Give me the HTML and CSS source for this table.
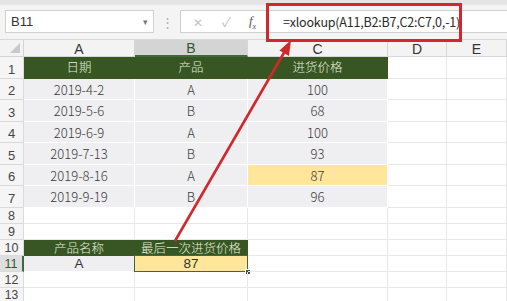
FILE: index.html
```html
<!DOCTYPE html>
<html lang="zh-CN">
<head>
<meta charset="utf-8">
<link rel="stylesheet" href="styles.css">
</head>
<body>
<div class="app">
  <div class="topbar">
    <div class="namebox"><span>B11</span><span class="caret">▾</span></div>
    <div class="grip">⋮</div>
    <div class="fbar">
      <div class="fbtns">
        <span class="fbtn x">✕</span>
        <span class="fbtn ok">✓</span>
        <span class="fbtn fx"><i>f</i><sub>x</sub></span>
      </div>
      <div class="formula">=xlookup(A11,B2:B7,C2:C7,0,-1)</div>
    </div>
  </div>
  <div class="sheet">
    <div class="c corner"><span class="tri"></span></div>
    <div class="c ch">A</div><div class="c ch sel">B</div><div class="c ch">C</div><div class="c ch">D</div><div class="c ch">E</div>

    <div class="c rh">1</div><div class="c g">日期</div><div class="c g">产品</div><div class="c g">进货价格</div><div class="c"></div><div class="c"></div>
    <div class="c rh">2</div><div class="c d">2019-4-2</div><div class="c d">A</div><div class="c d">100</div><div class="c"></div><div class="c"></div>
    <div class="c rh">3</div><div class="c d">2019-5-6</div><div class="c d">B</div><div class="c d">68</div><div class="c"></div><div class="c"></div>
    <div class="c rh">4</div><div class="c d">2019-6-9</div><div class="c d">A</div><div class="c d">100</div><div class="c"></div><div class="c"></div>
    <div class="c rh">5</div><div class="c d">2019-7-13</div><div class="c d">B</div><div class="c d">93</div><div class="c"></div><div class="c"></div>
    <div class="c rh">6</div><div class="c d">2019-8-16</div><div class="c d">A</div><div class="c d y">87</div><div class="c"></div><div class="c"></div>
    <div class="c rh">7</div><div class="c d">2019-9-19</div><div class="c d">B</div><div class="c d">96</div><div class="c"></div><div class="c"></div>
    <div class="c rh sm">8</div><div class="c"></div><div class="c"></div><div class="c"></div><div class="c"></div><div class="c"></div>
    <div class="c rh sm">9</div><div class="c"></div><div class="c"></div><div class="c"></div><div class="c"></div><div class="c"></div>
    <div class="c rh sm">10</div><div class="c g sm">产品名称</div><div class="c g sm">最后一次进货价格</div><div class="c"></div><div class="c"></div><div class="c"></div>
    <div class="c rh sm rsel">11</div><div class="c d sm lat">A</div><div class="c y sm lat active">87<span class="handle"></span></div><div class="c"></div><div class="c"></div><div class="c"></div>
    <div class="c rh sm">12</div><div class="c"></div><div class="c"></div><div class="c"></div><div class="c"></div><div class="c"></div>
    <div class="c rh sm last">13</div><div class="c"></div><div class="c"></div><div class="c"></div><div class="c"></div><div class="c"></div>
  </div>

  <div class="redbox"></div>
  <svg class="arrow" width="507" height="301" viewBox="0 0 507 301">
    <line x1="175" y1="241" x2="285" y2="51" stroke="#d0282c" stroke-width="2.6"/>
    <polygon points="291,40 289,56 279.5,50.5" fill="#d0282c"/>
  </svg>
</div>
</body>
</html>
```

FILE: styles.css
```css
* { box-sizing: border-box; }
html, body { margin: 0; padding: 0; background: #fff; }
body { width: 507px; height: 301px; overflow: hidden; font-family: "Noto Sans CJK SC", "Noto Sans", sans-serif; }

.app { position: relative; width: 507px; height: 301px; }

.topbar {
  height: 40px;
  background: linear-gradient(#e4e4e4 0, #e4e4e4 4px, #f4f4f4 6px, #f4f4f4 100%);
  display: flex;
  align-items: flex-start;
  padding-top: 10px;
  padding-left: 5px;
  border-bottom: 1px solid #d8d8d8;
}
.namebox {
  width: 149px; height: 23px;
  background: #fff; border: 1px solid #cfcfcf;
  display: flex; align-items: center; justify-content: space-between;
  padding: 0 5px 0 5px;
  font-size: 13px; color: #333;
  font-family: "Liberation Sans", "Noto Sans", sans-serif;
}
.caret { font-size: 9px; color: #777; }
.grip { width: 26px; text-align: center; color: #b0b0b0; font-size: 13px; line-height: 23px; }
.fbar {
  flex: 1; height: 23px; display: flex; align-items: stretch;
  background: #fff; border: 1px solid #cfcfcf; border-right: none;
  min-width: 0;
}
.fbtns { display: flex; align-items: center; width: 87px; flex: none; border-right: 1px solid #d8d8d8; }
.fbtn { color: #c4c4c4; font-size: 12px; }
.fbtn.x { margin-left: 12px; }
.fbtn.ok { margin-left: 19px; font-size: 13px; }
.fbtn.fx { margin-left: 18px; color: #555; font-family: "Liberation Serif", serif; font-size: 13px; }
.fbtn.fx sub { font-size: 8px; font-style: italic; }
.formula {
  padding-left: 15px; font-size: 12.5px; letter-spacing: -0.2px; color: #2a2a2a; line-height: 21px;
  font-family: "Noto Sans CJK SC", "Open Sans", sans-serif;
  white-space: nowrap;
}

.sheet {
  display: grid;
  grid-template-columns: 24px 111px 113px 140px 59px 60px;
  grid-template-rows: 17px 22px 21px 22px 21px 22px 21px 22px 16px 16px 16px 16px 16px 16px;
  font-size: 13px;
  font-weight: 300;
}
.c {
  border-right: 1px solid #e8e8e8;
  border-bottom: 1px solid #e8e8e8;
  display: flex; align-items: center; justify-content: center;
  color: #3a3a3a;
  line-height: 1;
  position: relative;
  white-space: nowrap;
}
.sm { font-size: 12.5px; line-height: 13px; }
.lat { font-size: 13.5px; font-family: "Liberation Sans", sans-serif; font-weight: 400; color: #333; }
.corner { background: #f3f3f3; border-color: #d4d4d4; }
.tri {
  position: absolute; right: 3px; bottom: 3px;
  width: 0; height: 0;
  border-left: 10px solid transparent;
  border-bottom: 10px solid #c9c9c9;
}
.ch {
  background: #f3f3f3; border-color: #d6d6d6; color: #333; font-size: 14px; padding-top: 1px;
  font-family: "Liberation Sans", sans-serif; font-weight: 400;
}
.ch.sel { background: #d4d4d4; border-bottom: 2px solid #3c6a3a; color: #2f5a2e; }
.rh {
  background: #f5f5f5; border-color: #dadada; color: #444; font-size: 13px;
  align-items: flex-end; padding-bottom: 2px;
  font-family: "Liberation Sans", sans-serif; font-weight: 400;
}
.rh.sm { font-size: 12.5px; align-items: center; padding-bottom: 0; padding-top: 1px; }
.rh.last { align-items: flex-start; padding-top: 1px; font-size: 12px; }
.rh.rsel { background: #dedede; border-right: 2px solid #3c6a3a; color: #2f5a2e; }
.g { background: #375623; color: #e6efdc; border-color: #375623; font-size: 12.5px; }
.d { background: #efeff1; border-color: #fff; }
.y { background: #ffe69a; }
.d.y { border-color: #fff; }
.active { border: 1px solid #3f6a38; margin-left: -1px; margin-top: -1px; height: 17px; width: 114px; }
.handle {
  position: absolute; right: -4px; bottom: -4px;
  width: 6px; height: 6px; background: #2f5a2e; border: 1px solid #fff;
}

.redbox {
  position: absolute; left: 266px; top: 3px; width: 196px; height: 39px;
  border: 3px solid #d0282c;
}
.arrow { position: absolute; left: 0; top: 0; pointer-events: none; }
```
